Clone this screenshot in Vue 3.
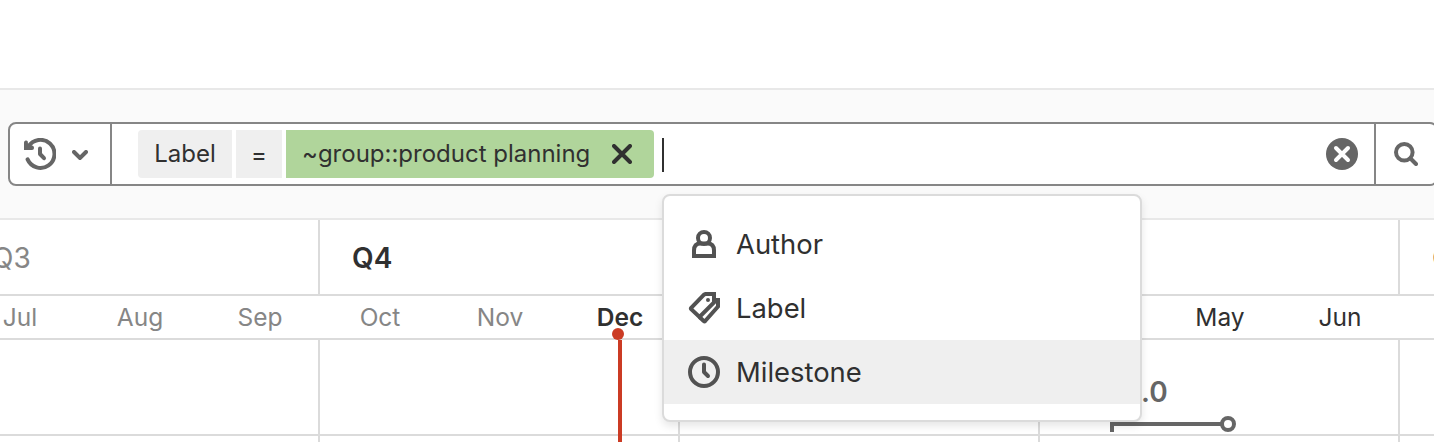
<script setup>
const months = [
  { name: 'Jul', tone: 'past' },
  { name: 'Aug', tone: 'past' },
  { name: 'Sep', tone: 'past' },
  { name: 'Oct', tone: 'past' },
  { name: 'Nov', tone: 'past' },
  { name: 'Dec', tone: 'current' },
  { name: '' },
  { name: '' },
  { name: '' },
  { name: '' },
  { name: 'May' },
  { name: 'Jun' },
]
const quarters = [
  { name: 'Q3', tone: 'past' },
  { name: 'Q4', tone: 'current' },
  { name: '' },
  { name: '' },
  { name: 'Q3' },
]
const options = [
  { name: 'Author', icon: 'user' },
  { name: 'Label', icon: 'labels' },
  { name: 'Milestone', icon: 'clock', active: true },
]
</script>

<template>
  <div class="page">
    <div class="topbar"></div>
    <div class="filter-band">
      <div class="search">
        <button class="history">
          <svg width="32" height="32" viewBox="0 0 16 16" fill="none">
            <path d="M2.2 4.4A7 7 0 1 1 1.8 10.7" stroke="#666" stroke-width="2" stroke-linecap="round" />
            <path d="M0 2.2a1 1 0 0 1 1.9-.4L2 3l2.400.9c.5.2.6.8.6 1.1a1 1 0 0 1-1 1H0z" fill="#666" />
            <path d="M8 5.2V8l2 2.1" stroke="#666" stroke-width="2" stroke-linecap="round" stroke-linejoin="round" />
          </svg>
          <svg class="chevron" width="16" height="10" viewBox="0 0 16 10" fill="none">
            <path d="M2 2l6 6 6-6" stroke="#666" stroke-width="4" stroke-linecap="round" />
          </svg>
        </button>
        <div class="input">
          <span class="token first">Label</span>
          <span class="token operator">=</span>
          <span class="token value">
            <span class="value-text">~group::product planning</span>
            <svg width="20" height="20" viewBox="0 0 20 20">
              <path d="M2 2l16 16M18 2L2 18" stroke="#303030" stroke-width="4" stroke-linecap="round" />
            </svg>
          </span>
          <span class="caret"></span>
          <svg class="clear" width="32" height="32" viewBox="0 0 32 32">
            <circle cx="16" cy="16" r="16" fill="#666" />
            <path d="M10 10l12 12M22 10L10 22" stroke="#fff" stroke-width="4" stroke-linecap="round" />
          </svg>
        </div>
        <button class="submit">
          <svg width="24" height="24" viewBox="0 0 24 24" fill="none">
            <circle cx="10.300" cy="10.300" r="8.300" stroke="#666" stroke-width="4" />
            <path d="M16.500 16.500l5.500 5.500" stroke="#666" stroke-width="4" stroke-linecap="round" />
          </svg>
        </button>
      </div>
    </div>

    <div class="timeline">
      <div class="quarters">
        <div v-for="(q, i) in quarters" :key="i" class="quarter" :class="q.tone">{{ q.name }}</div>
      </div>
      <div class="months">
        <div v-for="(m, i) in months" :key="i" class="month" :class="m.tone">{{ m.name }}</div>
      </div>
      <div class="lane">
        <div v-for="n in 5" :key="n" class="cell"></div>
      </div>
      <div class="lane">
        <div v-for="n in 5" :key="n" class="cell"></div>
      </div>
    </div>

    <span class="today-line"></span>
    <span class="today-dot"></span>

    <span class="milestone-name">.0</span>
    <svg class="milestone-bar" width="128" height="18" viewBox="0 0 128 18" fill="none">
      <path d="M2 16V8h110" stroke="#666" stroke-width="4" />
      <circle cx="118" cy="8" r="6" fill="#fff" stroke="#666" stroke-width="4" />
    </svg>

    <div class="menu">
      <div v-for="o in options" :key="o.name" class="option" :class="{ active: o.active }">
        <svg v-if="o.icon === 'user'" width="32" height="32" viewBox="0 0 32 32" fill="none" stroke="#525252" stroke-width="4">
          <path d="M6 28V22.500Q6 15.500 12.500 15.500H19.500Q26 15.500 26 22.500V28Z" />
          <circle cx="16" cy="10" r="6" />
        </svg>
        <svg v-else-if="o.icon === 'labels'" width="32" height="32" viewBox="0 0 32 32" fill="none" stroke="#525252">
          <path d="M17.500 2H26V10.500L11.500 25L3.200 17.200Q2.600 16.500 3.200 15.800L16 2.700Z" stroke-width="4" />
          <path d="M30 6V14.500L17.200 29Q16.500 29.700 15.700 29L11.500 25" stroke-width="4" />
          <circle cx="20" cy="8" r="2" fill="#525252" stroke="none" />
        </svg>
        <svg v-else width="32" height="32" viewBox="0 0 32 32" fill="none" stroke="#525252" stroke-width="4">
          <circle cx="16" cy="16" r="14" />
          <path d="M16 8.500V16l4 4" stroke-linecap="round" stroke-linejoin="round" />
        </svg>
        <span>{{ o.name }}</span>
      </div>
    </div>
  </div>
</template>

<style>
body {
  overflow: hidden;
}
</style>

<style scoped>
.page {
  position: relative;
  width: 1434px;
  height: 442px;
  overflow: hidden;
  background: #fff;
  color: #303030;
  font-family: Inter, "Liberation Sans", sans-serif;
  font-size: 24px;
}
.topbar {
  height: 88px;
  border-bottom: 2px solid #e8e8e8;
}
.filter-band {
  box-sizing: border-box;
  height: 130px;
  padding: 32px 0 0 8px;
  background: #fafafa;
  border-bottom: 2px solid #e8e8e8;
}
.search {
  box-sizing: border-box;
  display: flex;
  width: 1430px;
  height: 64px;
  border: 2px solid #868686;
  border-radius: 8px;
  background: #fff;
}
button {
  display: flex;
  align-items: center;
  margin: 0;
  padding: 0;
  border: 0;
  background: none;
}
.history {
  width: 100px;
  padding-left: 14px;
}
.chevron {
  margin: 2px 0 0 16px;
}
.input {
  display: flex;
  flex: 1;
  align-items: center;
  padding: 0 16px 0 26px;
  border: solid #868686;
  border-width: 0 2px;
}
.token {
  box-sizing: border-box;
  display: flex;
  align-items: center;
  justify-content: center;
  height: 48px;
  margin-right: 4px;
  padding-bottom: 2px;
  background: #efefef;
  white-space: nowrap;
}
.first {
  width: 94px;
  border-radius: 4px 0 0 4px;
}
.operator {
  width: 46px;
  padding-bottom: 0;
}
.value {
  justify-content: space-between;
  width: 368px;
  margin-right: 8px;
  padding: 0 22px 0 16px;
  border-radius: 0 4px 4px 0;
  background: #b0d59b;
}
.value-text {
  padding-bottom: 2px;
}
.caret {
  width: 2px;
  height: 34px;
  margin-top: 2px;
  background: #303030;
}
.clear {
  margin-left: auto;
}
.submit {
  width: 60px;
  padding-left: 18px;
}
.timeline {
  width: 1800px;
  margin-left: -40px;
}
.quarters,
.months,
.lane {
  display: flex;
  border-bottom: 2px solid #dbdbdb;
}
.quarter,
.cell {
  box-sizing: border-box;
  width: 360px;
  border-right: 2px solid #dbdbdb;
}
.quarter {
  height: 74px;
  padding-left: 32px;
  font-size: 28px;
  line-height: 76px;
}
.months {
  height: 42px;
}
.month {
  width: 120px;
  font-size: 24.5px;
  line-height: 43px;
  text-align: center;
}
.past {
  color: #868686;
}
.current {
  font-weight: 600;
}
.cell {
  height: 94px;
}
.today-line {
  position: absolute;
  left: 618px;
  top: 340px;
  width: 4px;
  height: 102px;
  background: #cb3b24;
}
.today-dot {
  position: absolute;
  left: 612px;
  top: 328px;
  width: 12px;
  height: 12px;
  border-radius: 50%;
  background: #cb3b24;
}
.milestone-name {
  position: absolute;
  left: 1141px;
  top: 375px;
  color: #666;
  font-size: 28px;
  font-weight: 600;
  line-height: 34px;
}
.milestone-bar {
  position: absolute;
  left: 1110px;
  top: 416px;
}
.menu {
  position: absolute;
  left: 662px;
  top: 194px;
  box-sizing: border-box;
  width: 480px;
  height: 228px;
  padding: 16px 0;
  border: 2px solid #dbdbdb;
  border-radius: 8px;
  background: #fff;
  box-shadow: 0 4px 8px rgba(0, 0, 0, 0.1);
}
.option {
  display: flex;
  align-items: center;
  gap: 16px;
  height: 64px;
  padding-left: 24px;
  font-size: 27.4px;
}
.active {
  background: #efefef;
}
</style>
